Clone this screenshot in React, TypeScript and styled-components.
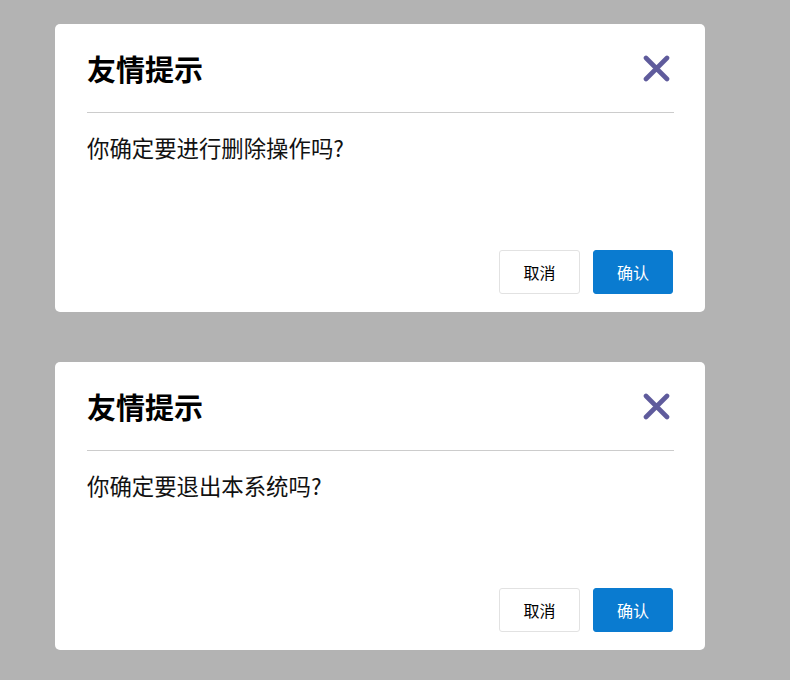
import React from "react";
import styled, { createGlobalStyle } from "styled-components";

const Global = createGlobalStyle`
  html, body {
    margin: 0;
    padding: 0;
    background: #b3b3b3;
  }
  body {
    font-family: "Noto Sans CJK SC", "Noto Sans", sans-serif;
  }
`;

const Page = styled.div`
  display: flex;
  flex-direction: column;
  gap: 50px;
  padding: 24px 0 0 55px;
  min-height: 680px;
  box-sizing: border-box;
`;

const Dialog = styled.div`
  width: 650px;
  height: 288px;
  background: #ffffff;
  border-radius: 5px;
  display: flex;
  flex-direction: column;
  box-sizing: border-box;
`;

const Header = styled.div`
  height: 89px;
  margin: 0 31px 0 32px;
  border-bottom: 1px solid #cccccc;
  display: flex;
  align-items: center;
  justify-content: space-between;
  box-sizing: border-box;
`;

const Title = styled.h2`
  margin: 0;
  font-size: 29px;
  font-weight: 700;
  color: #000;
  line-height: 1;
`;

const CloseButton = styled.button`
  border: none;
  background: none;
  padding: 0;
  margin-right: 4px;
  width: 27px;
  height: 27px;
  display: flex;
  cursor: pointer;
`;

const Body = styled.div`
  flex: 1;
  padding: 19px 32px 0;
  font-size: 22.4px;
  line-height: 30px;
  color: #111;
`;

const Footer = styled.div`
  display: flex;
  justify-content: flex-end;
  gap: 13px;
  padding: 0 32px 18px;
`;

const Button = styled.button<{ $primary?: boolean }>`
  width: ${(p) => (p.$primary ? "80px" : "81px")};
  height: 44px;
  border-radius: 3px;
  font-family: "Noto Sans CJK SC", sans-serif;
  font-size: 16px;
  cursor: pointer;
  border: 1px solid ${(p) => (p.$primary ? "#0a7bd0" : "#e2e2e2")};
  background: ${(p) => (p.$primary ? "#0a7bd0" : "#ffffff")};
  color: ${(p) => (p.$primary ? "#ffffff" : "#000000")};
`;

const CloseIcon = () => (
  <svg width="27" height="27" viewBox="0 0 27 27">
    <path
      d="M3 3 L24 24 M24 3 L3 24"
      stroke="#5f5b9c"
      strokeWidth="4.6"
      strokeLinecap="round"
      fill="none"
    />
  </svg>
);

const ConfirmDialog = ({ message }: { message: string }) => (
  <Dialog>
    <Header>
      <Title>友情提示</Title>
      <CloseButton aria-label="关闭">
        <CloseIcon />
      </CloseButton>
    </Header>
    <Body>{message}</Body>
    <Footer>
      <Button>取消</Button>
      <Button $primary>确认</Button>
    </Footer>
  </Dialog>
);

export default function App() {
  return (
    <>
      <Global />
      <Page>
        <ConfirmDialog message="你确定要进行删除操作吗?" />
        <ConfirmDialog message="你确定要退出本系统吗?" />
      </Page>
    </>
  );
}
